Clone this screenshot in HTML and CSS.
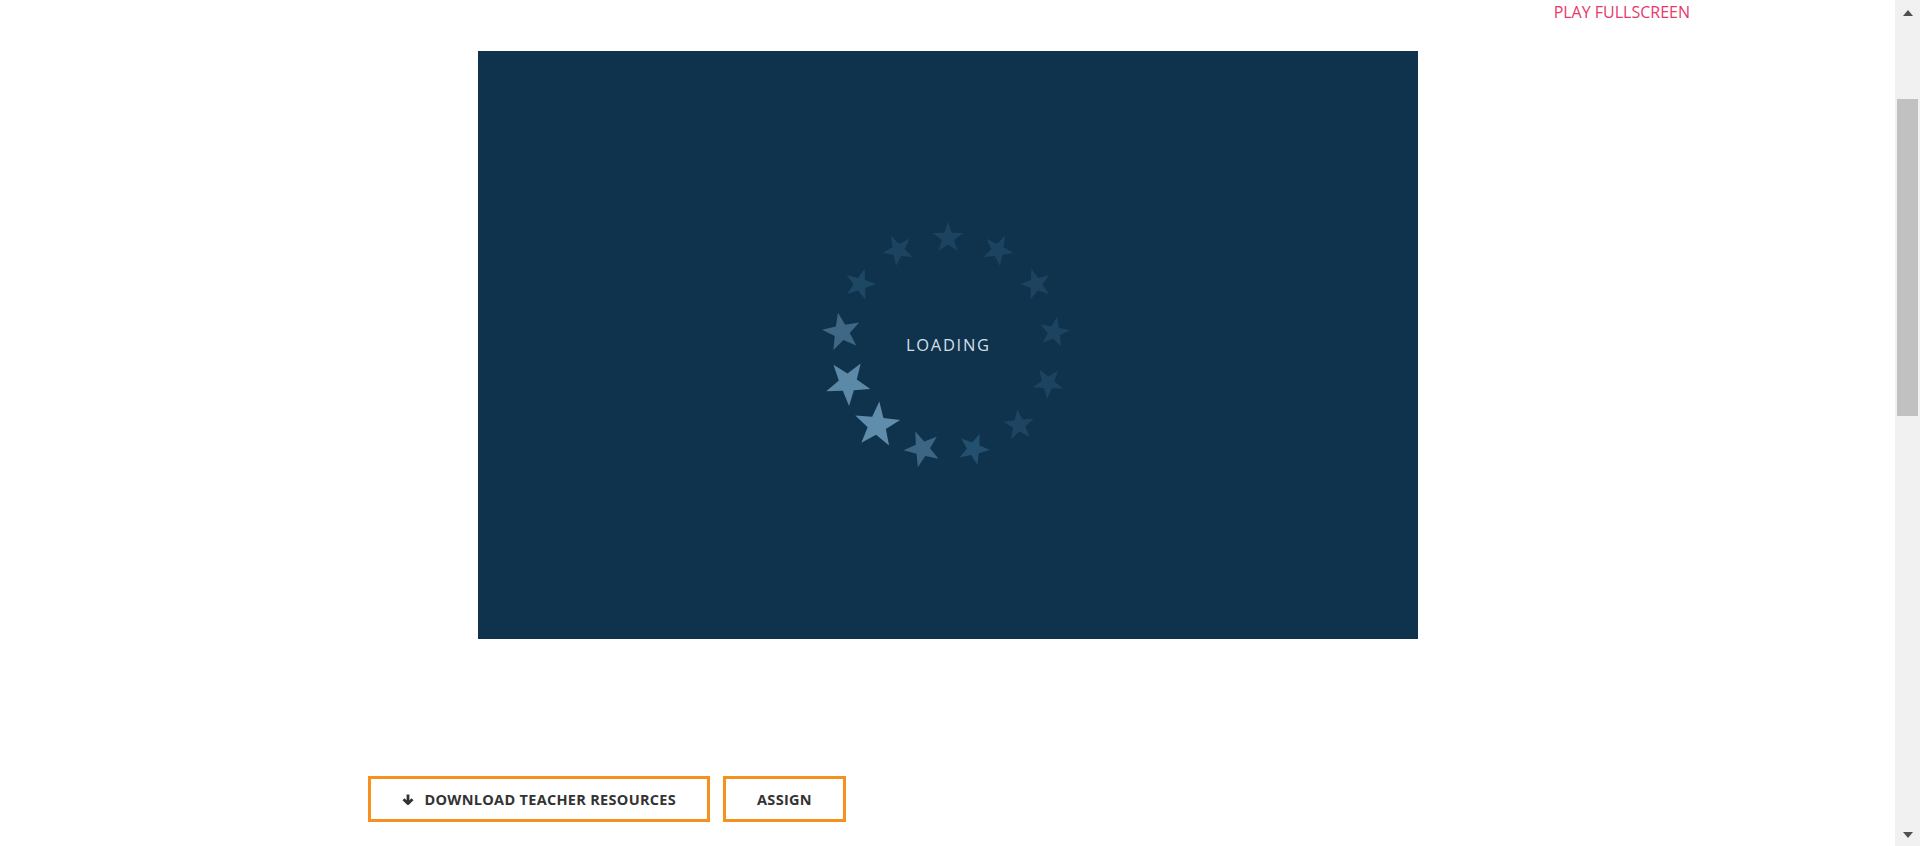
FILE: index.html
```html
<!DOCTYPE html>
<html lang="en">
<head>
<meta charset="utf-8">
<title>Game</title>
<link rel="stylesheet" href="styles.css">
</head>
<body>
<div class="page">
  <main class="main">
    <div class="topbar">
      <a class="fullscreen" href="#">PLAY FULLSCREEN</a>
    </div>
    <div class="game">
      <svg class="spinner" width="940" height="588" viewBox="0 0 940 588">
        <defs>
          <polygon id="star" points="0,-16 3.82,-5.26 15.22,-4.94 6.18,2.01 9.4,12.94 0,6.5 -9.4,12.94 -6.18,2.01 -15.22,-4.94 -3.82,-5.26"/>
        </defs>
        <g transform="translate(470 294)">
          <use href="#star" fill="#1c4360" transform="rotate(0) translate(0 -107)"/>
          <use href="#star" fill="#1c4360" transform="rotate(27.69) translate(0 -107)"/>
          <use href="#star" fill="#1c4360" transform="rotate(55.38) translate(0 -107)"/>
          <use href="#star" fill="#1c4360" transform="rotate(83.08) translate(0 -107)"/>
          <use href="#star" fill="#1c4360" transform="rotate(110.77) translate(0 -107)"/>
          <use href="#star" fill="#1d4562" transform="rotate(138.46) translate(0 -107)"/>
          <use href="#star" fill="#22506e" transform="rotate(166.15) translate(0 -107) scale(1.03)"/>
          <use href="#star" fill="#3c6684" transform="rotate(193.85) translate(0 -107) scale(1.18)"/>
          <use href="#star" fill="#5f8dab" transform="rotate(221.54) translate(0 -107) scale(1.48)"/>
          <use href="#star" fill="#5c89a7" transform="rotate(249.23) translate(0 -107) scale(1.45)"/>
          <use href="#star" fill="#3e6886" transform="rotate(276.92) translate(0 -107) scale(1.24)"/>
          <use href="#star" fill="#1e4764" transform="rotate(304.62) translate(0 -107)"/>
          <use href="#star" fill="#1c4360" transform="rotate(332.31) translate(0 -107)"/>
        </g>
      </svg>
      <div class="loading">LOADING</div>
    </div>
    <div class="actions">
      <a class="btn" href="#">
        <svg class="btn-icon" width="12" height="11" viewBox="0 0 12 11"><path d="M6 0.5V9.5M1.5 5.2L6 9.6L10.5 5.2" fill="none" stroke="#333" stroke-width="2.8"/></svg>
        DOWNLOAD TEACHER RESOURCES
      </a>
      <a class="btn" href="#">ASSIGN</a>
    </div>
  </main>
  <div class="scrollbar">
    <div class="sb-arrow sb-up"></div>
    <div class="sb-track"><div class="sb-thumb"></div></div>
    <div class="sb-arrow sb-down"></div>
  </div>
</div>
</body>
</html>
```
FILE: styles.css
```css
html, body {
  margin: 0;
  padding: 0;
  height: 100%;
  overflow: hidden;
  background: #ffffff;
}
body {
  font-family: "Open Sans", "Liberation Sans", sans-serif;
}
.page {
  display: flex;
  height: 846px;
}
.main {
  flex: 1;
  display: flex;
  flex-direction: column;
  align-items: center;
}
.topbar {
  align-self: stretch;
  display: flex;
  justify-content: flex-end;
  padding-right: 205px;
  height: 51px;
}
.fullscreen {
  color: #e8386b;
  text-decoration: none;
  font-size: 16px;
  line-height: 24px;
}
.game {
  position: relative;
  width: 940px;
  height: 588px;
  background: #0f334d;
}
.spinner {
  display: block;
}
.loading {
  position: absolute;
  left: 0;
  right: 0;
  top: 282px;
  text-align: center;
  color: #d3dfe8;
  font-size: 16.5px;
  line-height: 24px;
  letter-spacing: 1.7px;
  padding-left: 1.7px;
}
.actions {
  width: 1160px;
  display: flex;
  gap: 13px;
  margin-top: 137px;
}
.btn {
  display: flex;
  align-items: center;
  gap: 11px;
  height: 40px;
  padding: 0 31px;
  border: 3px solid #f5921f;
  color: #333333;
  text-decoration: none;
  font-weight: 700;
  font-size: 14.5px;
  letter-spacing: 0.3px;
}
.btn-icon {
  display: block;
}
.scrollbar {
  width: 25px;
  background: #f1f1f1;
  display: flex;
  flex-direction: column;
  align-items: center;
}
.sb-arrow {
  width: 0;
  height: 0;
  border-left: 5.5px solid transparent;
  border-right: 5.5px solid transparent;
}
.sb-up {
  border-bottom: 6px solid #505050;
  margin-top: 10px;
}
.sb-down {
  border-top: 6px solid #505050;
  margin-bottom: 8px;
}
.sb-track {
  flex: 1;
  align-self: stretch;
  padding: 0 2px;
}
.sb-thumb {
  margin-top: 83px;
  height: 317px;
  background: #c1c1c1;
}
```
